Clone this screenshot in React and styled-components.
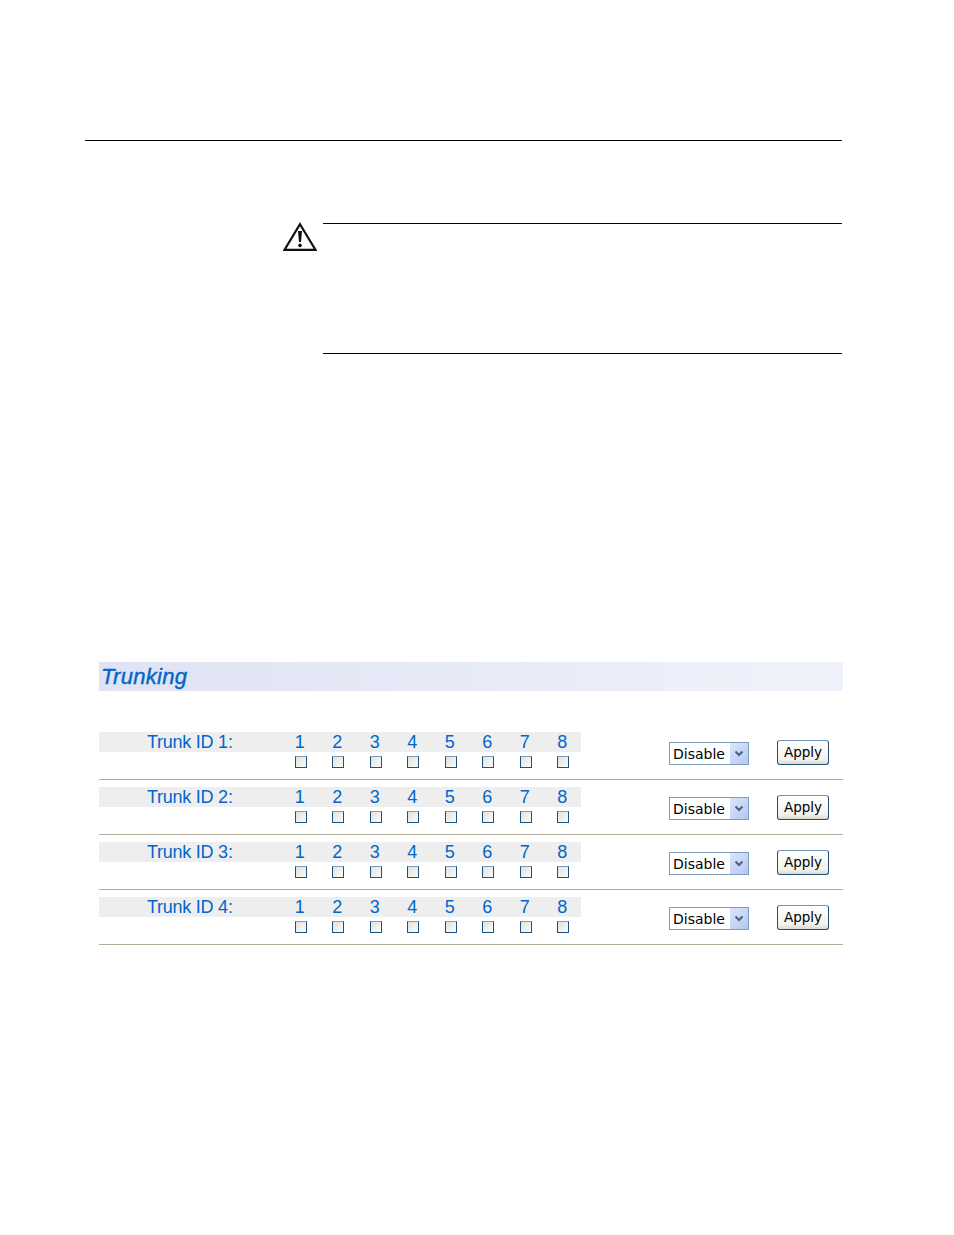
import React from "react";
import styled, { createGlobalStyle } from "styled-components";

const GlobalStyle = createGlobalStyle`
  html, body {
    margin: 0;
    padding: 0;
    background: #fff;
    font-family: "Liberation Sans", Arial, sans-serif;
  }
`;

const Page = styled.div`
  width: 954px;
  height: 1235px;
  padding: 140px 0 0 85px;
  box-sizing: border-box;
  overflow: hidden;
`;

const TopRule = styled.div`
  width: 757px;
  border-top: 1px solid #000;
`;

const Caution = styled.div`
  display: flex;
  margin: 82px 0 0 198px;
  width: 559px;
`;

const CautionIcon = styled.div`
  width: 40px;
  height: 32px;
  flex: none;
  display: flex;
  align-items: flex-start;
`;

const WarningSvg = styled.svg`
  margin-top: -1px;
`;

const CautionBox = styled.div`
  flex: 1;
  height: 129px;
  border-top: 1px solid #000;
  border-bottom: 1px solid #000;
`;

const Panel = styled.div`
  width: 744px;
  margin: 308px 0 0 14px;
`;

const TitleBar = styled.div`
  height: 29px;
  padding-left: 2px;
  background: linear-gradient(90deg, #dfe3f3, #f0f2fb);
  color: #0066cc;
  font-size: 22px;
  font-style: italic;
  line-height: 30px;
  letter-spacing: 0.3px;
  -webkit-text-stroke: 0.4px #0066cc;
`;

const Rows = styled.div`
  margin-top: 34px;
`;

const Row = styled.div`
  display: flex;
  height: 54px;
  border-bottom: 1px solid #b3af9c;
  box-sizing: content-box;
`;

const Ports = styled.div`
  width: 482px;
  padding-top: 7px;
`;

const Band = styled.div`
  display: flex;
  height: 20px;
  background: #eeeeee;
  color: #0066cc;
  font-size: 18px;
  line-height: 21px;
`;

const TrunkLabel = styled.div`
  width: 183px;
  padding-left: 48px;
  box-sizing: border-box;
  white-space: nowrap;
  letter-spacing: -0.25px;
`;

const PortGrid = styled.div`
  display: grid;
  grid-template-columns: repeat(8, 37.5px);
  justify-items: center;
`;

const CheckRow = styled(PortGrid)`
  margin: 4px 0 0 183px;
`;

const PortNumber = styled.span``;

const Check = styled.span`
  display: block;
  width: 10px;
  height: 10px;
  border: 1px solid #1c5180;
  border-top-color: #7f9db9;
  background: linear-gradient(135deg, #e2e2dc, #fbfbf9);
`;

const Controls = styled.div`
  display: flex;
  align-items: flex-start;
  padding: 15px 0 0 88px;
`;

const SelectBox = styled.div`
  display: flex;
  align-items: center;
  width: 80px;
  height: 23px;
  margin-top: 2px;
  box-sizing: border-box;
  border: 1px solid #7f9db9;
  background: #fff;
  color: #000;
  font-family: "DejaVu Sans", sans-serif;
  font-size: 14px;
  padding-left: 3px;
`;

const SelectText = styled.span`
  flex: 1;
  height: 21px;
  padding-top: 1px;
  box-sizing: border-box;
  line-height: 20px;
`;

const SelectArrow = styled.span`
  display: flex;
  align-items: center;
  justify-content: center;
  width: 18px;
  height: 21px;
  background: linear-gradient(135deg, #dbe5fb, #b4c8f5);
`;

const ApplyButton = styled.button`
  width: 52px;
  height: 25px;
  margin-left: 28px;
  padding: 0 0 2px;
  border: 1px solid #1f4f7a;
  border-top-color: #6f94b8;
  border-radius: 3px;
  background: linear-gradient(180deg, #fff, #f3f3ec 80%, #dcd8ce);
  color: #000;
  font-family: "DejaVu Sans", sans-serif;
  font-size: 13.5px;
`;

const ports = [1, 2, 3, 4, 5, 6, 7, 8];
const trunks = [1, 2, 3, 4];

const WarningIcon = () => (
  <WarningSvg width="34" height="30" viewBox="0 0 34 30">
    <path d="M17 2.2 L32.4 27.8 H1.6 Z" fill="none" stroke="#111" strokeWidth="2.2" />
    <path d="M15 9 h4 l-1 11 h-2 Z" fill="#111" />
    <circle cx="17" cy="23.4" r="1.8" fill="#111" />
  </WarningSvg>
);

const App = () => (
  <Page>
    <GlobalStyle />
    <TopRule />
    <Caution>
      <CautionIcon>
        <WarningIcon />
      </CautionIcon>
      <CautionBox />
    </Caution>
    <Panel>
      <TitleBar>Trunking</TitleBar>
      <Rows>
        {trunks.map((id) => (
          <Row key={id}>
            <Ports>
              <Band>
                <TrunkLabel>Trunk ID {id}:</TrunkLabel>
                <PortGrid>
                  {ports.map((p) => (
                    <PortNumber key={p}>{p}</PortNumber>
                  ))}
                </PortGrid>
              </Band>
              <CheckRow>
                {ports.map((p) => (
                  <Check key={p} />
                ))}
              </CheckRow>
            </Ports>
            <Controls>
              <SelectBox>
                <SelectText>Disable</SelectText>
                <SelectArrow>
                  <svg width="10" height="8" viewBox="0 0 10 8">
                    <path d="M1.5 1.5 L5 5 L8.5 1.5" fill="none" stroke="#4d6185" strokeWidth="2" />
                  </svg>
                </SelectArrow>
              </SelectBox>
              <ApplyButton>Apply</ApplyButton>
            </Controls>
          </Row>
        ))}
      </Rows>
    </Panel>
  </Page>
);

export default App;
